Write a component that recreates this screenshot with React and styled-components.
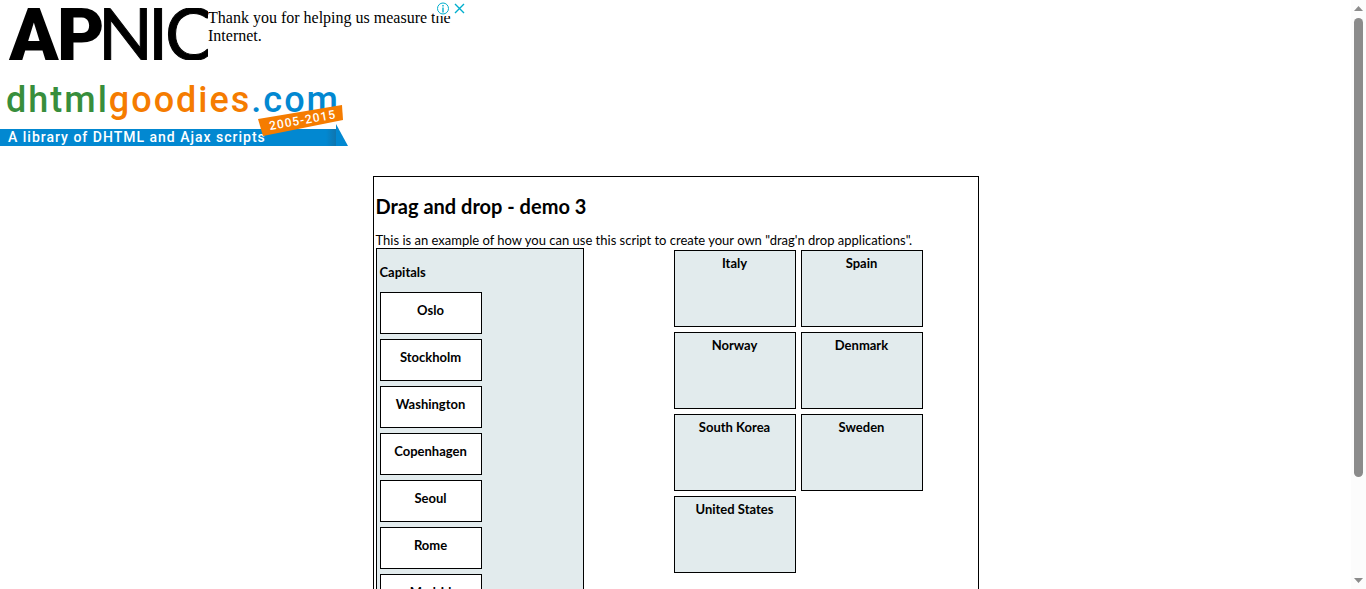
import React from "react";
import styled, { createGlobalStyle } from "styled-components";

const Global = createGlobalStyle`
  * { box-sizing: border-box; }
  body {
    margin: 0;
    background: #fff;
    color: #000;
    font-family: "Trebuchet MS", Lato, sans-serif;
    font-size: 13px;
    line-height: 16px;
    font-variant-ligatures: none;
  }
`;

const Shell = styled.div`
  display: flex;
  height: 100vh;
  overflow: hidden;
`;

const Page = styled.div`
  flex: 1;
  min-width: 0;
  overflow: hidden;
`;

const Ad = styled.aside`
  position: relative;
  display: flex;
  width: 468px;
  height: 60px;
  padding-top: 8px;
  overflow: hidden;
  font: 16px/18px "Liberation Serif", serif;
`;

const AdLogo = styled.svg`
  flex: none;
  width: 200px;
  height: 52px;
  margin-left: 8px;
`;

const AdText = styled.p`
  flex: 1;
  margin: 0;
  padding-top: 1px;
`;

const AdControls = styled.div`
  position: absolute;
  top: 1px;
  right: 1px;
  display: flex;
  background: #fff;
`;

const AdButton = styled.button`
  width: 16px;
  height: 15px;
  padding: 0;
  border: 0;
  background: none;
  svg { display: block; }
`;

const SiteLogo = styled.a`
  display: block;
  width: 360px;
  height: 90px;
  margin-bottom: 26px;
  svg { display: block; font-family: Roboto, sans-serif; font-weight: 500; }
`;

const Main = styled.main`
  width: 606px;
  margin: 0 auto;
  padding: 18px 2px;
  border: 1px solid #000;
`;

const Title = styled.h1`
  margin: 0 0 16px;
  font-size: 20px;
  line-height: 22px;
`;

const Intro = styled.p`
  margin: 0;
  padding-bottom: 1px;
  line-height: 14px;
  white-space: nowrap;
`;

const Board = styled.div`
  display: flex;
  justify-content: space-between;
  align-items: flex-start;
`;

const Panel = styled.section`
  width: 208px;
  padding: 15px 3px 3px;
  border: 1px solid #000;
  background: #e2ebed;
`;

const PanelTitle = styled.h2`
  margin: 0 0 12px;
  font-size: 13px;
  line-height: 16px;
`;

const CapitalList = styled.ul`
  display: flex;
  flex-direction: column;
  gap: 5px;
  margin: 0;
  padding: 0;
  list-style: none;
`;

const Capital = styled.li`
  width: 102px;
  height: 42px;
  padding-top: 9px;
  border: 1px solid #000;
  background: #fff;
  font-weight: 700;
  text-align: center;
  cursor: move;
`;

const Countries = styled.section`
  display: grid;
  grid-template-columns: 122px 122px;
  gap: 5px;
  margin: 2px 53px 0 0;
`;

const Country = styled.div`
  height: 77px;
  padding-top: 4px;
  border: 1px solid #000;
  background: #e2ebed;
  font-weight: 700;
  text-align: center;
`;

const Scrollbar = styled.div`
  display: flex;
  flex-direction: column;
  align-items: center;
  width: 15px;
  background: #fcfcfc;
`;

const Arrow = styled.svg`
  flex: none;
  width: 9px;
  height: 18px;
  fill: #8b8b8b;
`;

const Track = styled.div`
  flex: 1;
  width: 9px;
`;

const Thumb = styled.div`
  height: 83%;
  border-radius: 5px;
  background: #8b8b8b;
`;

const capitals = ["Oslo", "Stockholm", "Washington", "Copenhagen", "Seoul", "Rome", "Madrid"];
const countries = ["Italy", "Spain", "Norway", "Denmark", "South Korea", "Sweden", "United States"];

export default function App() {
  return (
    <Shell>
      <Global />
      <Page>
        <Ad>
          <AdLogo viewBox="0 0 200 52">
            <text x="1 49" y="52" fontFamily="Roboto, sans-serif" fontSize="73" fontWeight="900">AP</text>
            <text x="90 140 157" y="52" fontFamily="Lato, sans-serif" fontSize="72" stroke="#000">NIC</text>
          </AdLogo>
          <AdText>Thank you for helping us measure the Internet.</AdText>
          <AdControls>
            <AdButton aria-label="About this ad">
              <svg width="16" height="15" viewBox="0 0 16 15" fill="none" stroke="#00aecd">
                <circle cx="8" cy="7.5" r="5.5" />
                <path d="M8 4v1.5M8 6.5v5" strokeWidth="1.4" />
              </svg>
            </AdButton>
            <AdButton aria-label="Close ad">
              <svg width="16" height="15" viewBox="0 0 16 15" stroke="#00aecd" strokeWidth="1.4">
                <path d="M4 3l9 9M13 3l-9 9" />
              </svg>
            </AdButton>
          </AdControls>
        </Ad>
        <SiteLogo href="#">
          <svg width="360" height="90" viewBox="0 0 360 90">
            <defs>
              <linearGradient id="fold" x1="0" x2="1">
                <stop offset="0" stopColor="#0288d1" />
                <stop offset="1" stopColor="#0f75ae" />
              </linearGradient>
            </defs>
            <text x="6" y="52" fontSize="36" letterSpacing="2">
              <tspan fill="#388e3c">dhtml</tspan>
              <tspan fill="#f57c00">goodies</tspan>
              <tspan fill="#0288d1">.com</tspan>
            </text>
            <path d="M0 69h336v17H0z" fill="#0288d1" />
            <path d="M326 69h10v17h-10z" fill="url(#fold)" />
            <path d="M336 64l12 22h-12z" fill="#0288d1" />
            <text x="8" y="82" fontSize="14" letterSpacing="1" fill="#fff">A library of DHTML and Ajax scripts</text>
            <path d="M258 59l84-14 1 15-80 16z" fill="#f57c00" />
            <text x="270" y="70" fontSize="12" letterSpacing="1" fill="#fff" transform="rotate(-10 270 70)">2005-2015</text>
          </svg>
        </SiteLogo>
        <Main>
          <Title>Drag and drop - demo 3</Title>
          <Intro>This is an example of how you can use this script to create your own "drag'n drop applications".</Intro>
          <Board>
            <Panel>
              <PanelTitle>Capitals</PanelTitle>
              <CapitalList>
                {capitals.map((name) => <Capital key={name}>{name}</Capital>)}
              </CapitalList>
            </Panel>
            <Countries>
              {countries.map((name) => <Country key={name}>{name}</Country>)}
            </Countries>
          </Board>
        </Main>
      </Page>
      <Scrollbar>
        <Arrow viewBox="0 0 9 18"><path d="M4.500 6L9 11H0z" /></Arrow>
        <Track><Thumb /></Track>
        <Arrow viewBox="0 0 9 18"><path d="M4.500 12L9 7H0z" /></Arrow>
      </Scrollbar>
    </Shell>
  );
}
